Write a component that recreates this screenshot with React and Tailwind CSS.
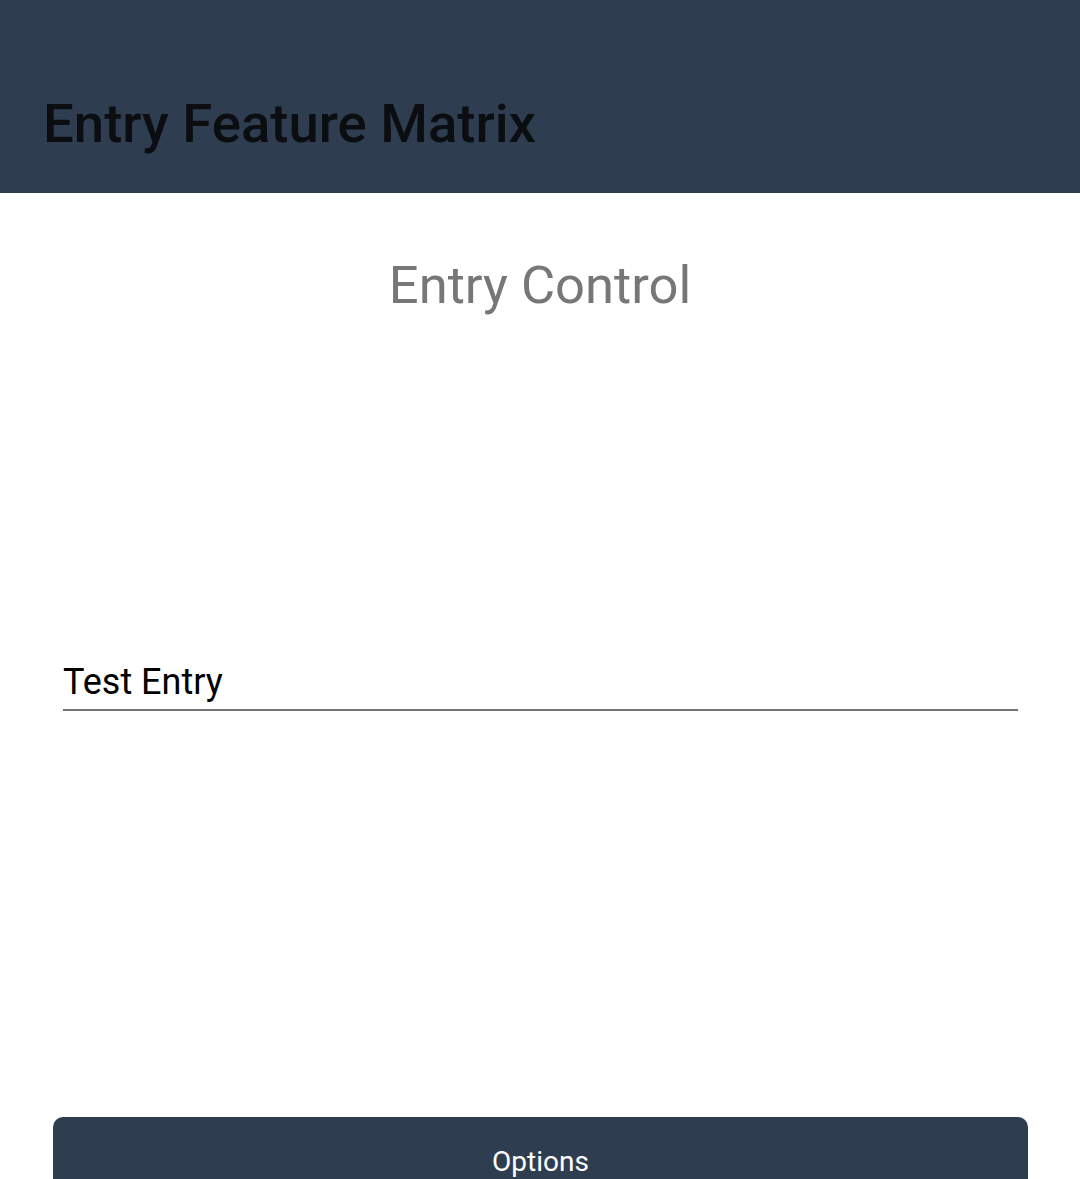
export default function App() {
  return (
    <div className="w-[1080px] h-[1179px] overflow-hidden bg-white flex flex-col" style={{ fontFamily: 'Roboto, "Noto Sans", sans-serif' }}>
      <header className="h-[193px] bg-[#2e3e50] flex items-end px-[43px] pb-[43px] shrink-0">
        <h1 className="text-[54.5px] leading-none font-medium text-[#0b0d10]">Entry Feature Matrix</h1>
      </header>
      <div className="flex flex-col items-center pt-[57px]">
        <h2 className="text-[52.5px] leading-[70px] text-[#777777]">Entry Control</h2>
      </div>
      <div className="pl-[63px] pr-[62px] mt-[341px]">
        <div className="border-b-[2.5px] border-[#737373] pb-[6px]">
          <span className="text-[36px] leading-[42px] text-black">Test Entry</span>
        </div>
      </div>
      <div className="pl-[53px] pr-[52px] mt-[405.5px]">
        <button className="w-full h-[100px] bg-[#2e3e50] rounded-[10px] flex justify-center pt-[25px] text-[28px] leading-[40px] text-white">Options</button>
      </div>
    </div>
  );
}
